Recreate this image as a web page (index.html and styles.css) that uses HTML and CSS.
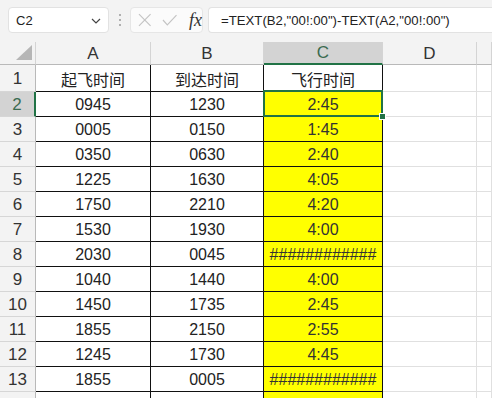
FILE: index.html
```html
<!DOCTYPE html>
<html lang="zh-CN">
<head>
    <meta charset="UTF-8">
    <meta name="viewport" content="width=device-width, initial-scale=1.0">
    <title>飞行时间</title>
    <link rel="stylesheet" href="styles.css">
</head>
<body>
    <div class="toolbar">
        <div class="name-box">
            <span>C2</span>
            <svg class="chevron" width="10" height="6" viewBox="0 0 10 6"><path d="M1 1l4 4 4-4" fill="none" stroke="#444" stroke-width="1.2"/></svg>
        </div>
        <div class="dots"><i></i><i></i><i></i></div>
        <div class="fx-buttons">
            <svg width="14" height="14" viewBox="0 0 14 14"><path d="M1 1l12 12M13 1L1 13" stroke="#c4c4c4" stroke-width="1.2" fill="none"/></svg>
            <svg width="16" height="12" viewBox="0 0 16 12"><path d="M1 6l4.5 5L15 1" stroke="#c4c4c4" stroke-width="1.2" fill="none"/></svg>
            <span class="fx">fx</span>
        </div>
        <div class="formula">=TEXT(B2,"00!:00")-TEXT(A2,"00!:00")</div>
    </div>

    <table class="sheet">
        <colgroup>
            <col class="c-row"><col class="c-a"><col class="c-b"><col class="c-c"><col class="c-d"><col>
        </colgroup>
        <thead>
            <tr>
                <th class="corner"><span class="tri"></span></th>
                <th>A</th>
                <th>B</th>
                <th class="active">C</th>
                <th>D</th>
                <th></th>
            </tr>
        </thead>
        <tbody>
            <tr><th>1</th><td class="d">起飞时间</td><td class="d">到达时间</td><td class="d">飞行时间</td><td class="e"></td><td class="e"></td></tr>
            <tr><th class="active">2</th><td class="d">0945</td><td class="d">1230</td><td class="d y sel">2:45<span class="handle"></span></td><td class="e"></td><td class="e"></td></tr>
            <tr><th>3</th><td class="d">0005</td><td class="d">0150</td><td class="d y">1:45</td><td class="e"></td><td class="e"></td></tr>
            <tr><th>4</th><td class="d">0350</td><td class="d">0630</td><td class="d y">2:40</td><td class="e"></td><td class="e"></td></tr>
            <tr><th>5</th><td class="d">1225</td><td class="d">1630</td><td class="d y">4:05</td><td class="e"></td><td class="e"></td></tr>
            <tr><th>6</th><td class="d">1750</td><td class="d">2210</td><td class="d y">4:20</td><td class="e"></td><td class="e"></td></tr>
            <tr><th>7</th><td class="d">1530</td><td class="d">1930</td><td class="d y">4:00</td><td class="e"></td><td class="e"></td></tr>
            <tr><th>8</th><td class="d">2030</td><td class="d">0045</td><td class="d y">############</td><td class="e"></td><td class="e"></td></tr>
            <tr><th>9</th><td class="d">1040</td><td class="d">1440</td><td class="d y">4:00</td><td class="e"></td><td class="e"></td></tr>
            <tr><th>10</th><td class="d">1450</td><td class="d">1735</td><td class="d y">2:45</td><td class="e"></td><td class="e"></td></tr>
            <tr><th>11</th><td class="d">1855</td><td class="d">2150</td><td class="d y">2:55</td><td class="e"></td><td class="e"></td></tr>
            <tr><th>12</th><td class="d">1245</td><td class="d">1730</td><td class="d y">4:45</td><td class="e"></td><td class="e"></td></tr>
            <tr><th>13</th><td class="d">1855</td><td class="d">0005</td><td class="d y">############</td><td class="e"></td><td class="e"></td></tr>
            <tr><th>14</th><td class="d">1645</td><td class="d">1730</td><td class="d y">4:45</td><td class="e"></td><td class="e"></td></tr>
        </tbody>
    </table>
</body>
</html>
```
FILE: styles.css
```css
body {
    margin: 0;
    width: 492px;
    height: 398px;
    overflow: hidden;
    background: #fff;
    font-family: "Liberation Sans", "Noto Sans CJK SC", sans-serif;
    color: #222;
}

/* formula bar */
.toolbar {
    display: flex;
    align-items: center;
    height: 42px;
    padding: 7px 0 9px 8px;
    box-sizing: border-box;
    background: #f3f3f3;
}
.name-box {
    display: flex;
    align-items: center;
    justify-content: space-between;
    width: 101px;
    height: 26px;
    box-sizing: border-box;
    padding: 0 7px 0 7px;
    background: #fff;
    border: 1px solid #e2e2e2;
    border-radius: 4px;
    font-size: 13px;
    color: #222;
}
.chevron { margin-top: 1px; }
.dots {
    display: flex;
    flex-direction: column;
    gap: 3px;
    width: 21px;
    align-items: center;
}
.dots i {
    width: 2px;
    height: 2px;
    background: #9a9a9a;
    border-radius: 1px;
}
.fx-buttons {
    display: flex;
    align-items: center;
    gap: 10px;
    width: 73px;
    height: 26px;
    box-sizing: border-box;
    padding-left: 7px;
    background: #fbfbfb;
    border: 1px solid #e6e6e6;
    border-radius: 4px;
}
.fx {
    font-family: "Liberation Serif", serif;
    font-style: italic;
    font-size: 18px;
    color: #333;
    margin-left: 2px;
}
.formula {
    flex: 1;
    height: 26px;
    margin-left: 5px;
    padding-left: 12px;
    box-sizing: border-box;
    line-height: 25px;
    background: #fff;
    border: 1px solid #e2e2e2;
    border-right: none;
    border-radius: 4px 0 0 4px;
    font-size: 13.2px;
    color: #222;
    white-space: nowrap;
}

/* grid */
.sheet {
    border-collapse: separate;
    border-spacing: 0;
    table-layout: fixed;
    width: 492px;
}
.c-row { width: 36px; }
.c-a { width: 115px; }
.c-b { width: 113px; }
.c-c { width: 119px; }
.c-d { width: 94px; }

.sheet th, .sheet td {
    box-sizing: border-box;
    padding: 2px 0 0;
    text-align: center;
    vertical-align: middle;
    font-weight: normal;
    white-space: nowrap;
    overflow: hidden;
}
.sheet thead th {
    height: 22px;
    font-size: 17px;
    color: #333;
    background: #f3f3f3;
    border-right: 1px solid #d4d4d4;
    border-bottom: 1px solid #b9b9b9;
    padding-top: 1px;
}
.sheet thead th.active {
    background: #d3d3d3;
    color: #3b6b50;
    border-bottom: 2px solid #217346;
}
.sheet .corner { position: relative; }
.tri {
    position: absolute;
    right: 3px;
    bottom: 4px;
    width: 0;
    height: 0;
    border-left: 16px solid transparent;
    border-bottom: 15px solid #b6b6b6;
}
.sheet tbody th {
    height: 25px;
    font-size: 17px;
    color: #333;
    background: #f3f3f3;
    border-right: 1px solid #b9b9b9;
    border-bottom: 1px solid #d6d6d6;
}
.sheet tbody th.active {
    background: #d3d3d3;
    color: #3b6b50;
    border-right: 2px solid #217346;
}
.sheet td {
    height: 25px;
    font-size: 16px;
    color: #222;
}
.sheet td.d {
    border-right: 1px solid #111;
    border-bottom: 1px solid #111;
}
.sheet td.e {
    border-right: 1px solid #e0e0e0;
    border-bottom: 1px solid #e0e0e0;
}
.sheet td.y { background: #ffff00; color: #333; }

/* active cell */
.sheet td.sel {
    position: relative;
    overflow: visible;
}
.sheet td.sel::after {
    content: "";
    position: absolute;
    left: -1px;
    top: -2px;
    right: -1px;
    bottom: -1px;
    border: 2px solid #217346;
}
.handle {
    position: absolute;
    right: -4px;
    bottom: -4px;
    width: 5px;
    height: 5px;
    background: #217346;
    border: 1px solid #fff;
    z-index: 1;
}
```
